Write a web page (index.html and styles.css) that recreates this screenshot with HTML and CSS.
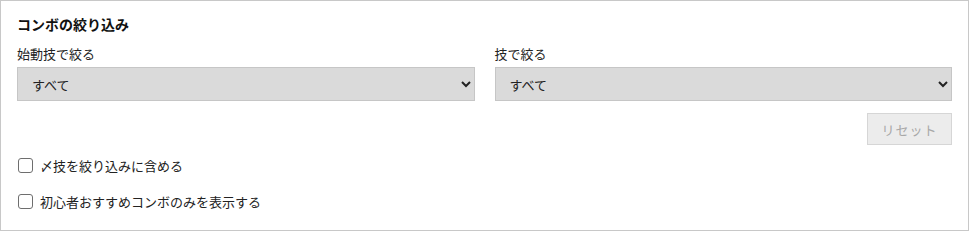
FILE: index.html
```html
<!DOCTYPE html>
<html lang="ja">
<head>
<meta charset="utf-8">
<link rel="stylesheet" href="styles.css">
</head>
<body>
<section class="panel">
  <h2 class="title">コンボの絞り込み</h2>
  <div class="filters">
    <label class="field">
      <span class="field-label">始動技で絞る</span>
      <select class="select"><option>すべて</option></select>
    </label>
    <label class="field">
      <span class="field-label">技で絞る</span>
      <select class="select"><option>すべて</option></select>
    </label>
  </div>
  <div class="actions">
    <button class="reset" disabled>リセット</button>
  </div>
  <label class="check"><input type="checkbox" class="box"><span>〆技を絞り込みに含める</span></label>
  <label class="check"><input type="checkbox" class="box"><span>初心者おすすめコンボのみを表示する</span></label>
</section>
</body>
</html>
```
FILE: styles.css
```css
html, body {
  margin: 0;
  padding: 0;
  background: #fff;
}
body {
  font-family: "Noto Sans CJK JP", "Noto Sans", sans-serif;
  color: #222;
}
.panel {
  box-sizing: border-box;
  width: 969px;
  height: 231px;
  border: 1px solid #c8c8c8;
  padding: 13px 16px 0 16px;
}
.title {
  margin: 0 0 10px 0;
  font-size: 14px;
  line-height: 20px;
  font-weight: bold;
  color: #111;
}
.filters {
  display: grid;
  grid-template-columns: 1fr 1fr;
  column-gap: 20px;
}
.field {
  display: flex;
  flex-direction: column;
}
.field-label {
  font-size: 13px;
  line-height: 20px;
  margin-bottom: 3px;
}
.select {
  box-sizing: border-box;
  height: 34px;
  width: 100%;
  margin: 0;
  background-color: #dadada;
  border: 1px solid #c6c6c6;
  border-radius: 0;
  padding: 0 8px 0 10px;
  font-family: inherit;
  font-size: 13px;
  color: #222;
}
.actions {
  display: flex;
  justify-content: flex-end;
  margin-top: 12px;
}
.reset {
  box-sizing: border-box;
  width: 85px;
  height: 32px;
  background: #ececec;
  border: 1px solid #d6d6d6;
  border-radius: 0;
  color: #a8a8a8;
  font-family: inherit;
  font-size: 13px;
  letter-spacing: 1px;
  padding: 0;
}
.check {
  display: flex;
  align-items: center;
  height: 20px;
  font-size: 13px;
  margin-top: 10px;
}
.check + .check {
  margin-top: 16px;
}
.box {
  appearance: none;
  -webkit-appearance: none;
  box-sizing: border-box;
  width: 15px;
  height: 15px;
  margin: 0 7px 0 1px;
  border: 1px solid #6e6e6e;
  border-radius: 3px;
  background: #fff;
}
```
